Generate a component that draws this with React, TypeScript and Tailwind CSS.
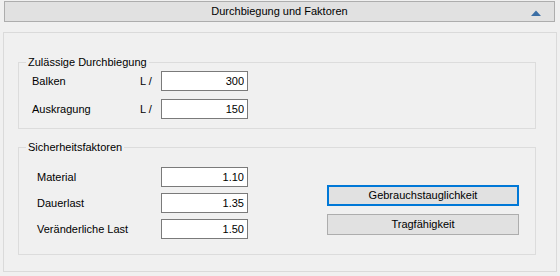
const deflection = [
  { label: "Balken", value: "300" },
  { label: "Auskragung", value: "150" },
];

const factors = [
  { label: "Material", value: "1.10" },
  { label: "Dauerlast", value: "1.35" },
  { label: "Veränderliche Last", value: "1.50" },
];

function ValueBox({ value }: { value: string }) {
  return (
    <input
      readOnly
      value={value}
      className="h-[20px] w-[87px] border border-[#7a7a7a] bg-white pr-[3px] text-right text-[11px] text-black outline-none"
    />
  );
}

function GroupTitle({ children }: { children: string }) {
  return (
    <div className="-mt-[7px] ml-[7px] w-fit bg-[#f0f0f0] px-[2px] leading-[13px]">{children}</div>
  );
}

export default function App() {
  return (
    <div
      className="h-[276px] w-[560px] overflow-hidden bg-[#f0f0f0] pt-[1px] text-[11px] text-black"
      style={{ fontFamily: '"Liberation Sans", Arial, sans-serif' }}
    >
      <div className="relative ml-[4px] flex h-[21px] w-[551px] items-center justify-center border border-[#adadad] bg-[#e1e1e1]">
        <span>Durchbiegung und Faktoren</span>
        <svg className="absolute right-[13px] top-[8px]" width="10" height="6" viewBox="0 0 10 6">
          <path d="M0 6 L5 0.5 L10 6 Z" fill="#3a6ea5" />
        </svg>
      </div>

      <div className="ml-[3px] mt-[10px] h-[240px] w-[554px] border border-[#dadada]">
        <div className="ml-[14px] mt-[29px] h-[67px] w-[518px] border border-[#dcdcdc]">
          <GroupTitle>Zulässige Durchbiegung</GroupTitle>
          <div className="mt-[2px] flex flex-col gap-[8px] pl-[13px]">
            {deflection.map((row) => (
              <div key={row.label} className="flex h-[20px] items-center">
                <span className="w-[108px]">{row.label}</span>
                <span className="w-[21px]">L /</span>
                <ValueBox value={row.value} />
              </div>
            ))}
          </div>
        </div>

        <div className="ml-[14px] mt-[18px] h-[108px] w-[518px] border border-[#dcdcdc]">
          <GroupTitle>Sicherheitsfaktoren</GroupTitle>
          <div className="mt-[13px] flex pl-[18px]">
            <div className="flex flex-col gap-[6px]">
              {factors.map((row) => (
                <div key={row.label} className="flex h-[20px] items-center">
                  <span className="w-[124px]">{row.label}</span>
                  <ValueBox value={row.value} />
                </div>
              ))}
            </div>
            <div className="ml-[79px] mt-[18px] flex flex-col gap-[8px]">
              <button
                type="button"
                className="h-[21px] w-[192px] border-2 border-[#0078d7] bg-[#e1e1e1] text-[11px]"
              >
                Gebrauchstauglichkeit
              </button>
              <button
                type="button"
                className="h-[21px] w-[192px] border border-[#adadad] bg-[#e1e1e1] text-[11px]"
              >
                Tragfähigkeit
              </button>
            </div>
          </div>
        </div>
      </div>
    </div>
  );
}
